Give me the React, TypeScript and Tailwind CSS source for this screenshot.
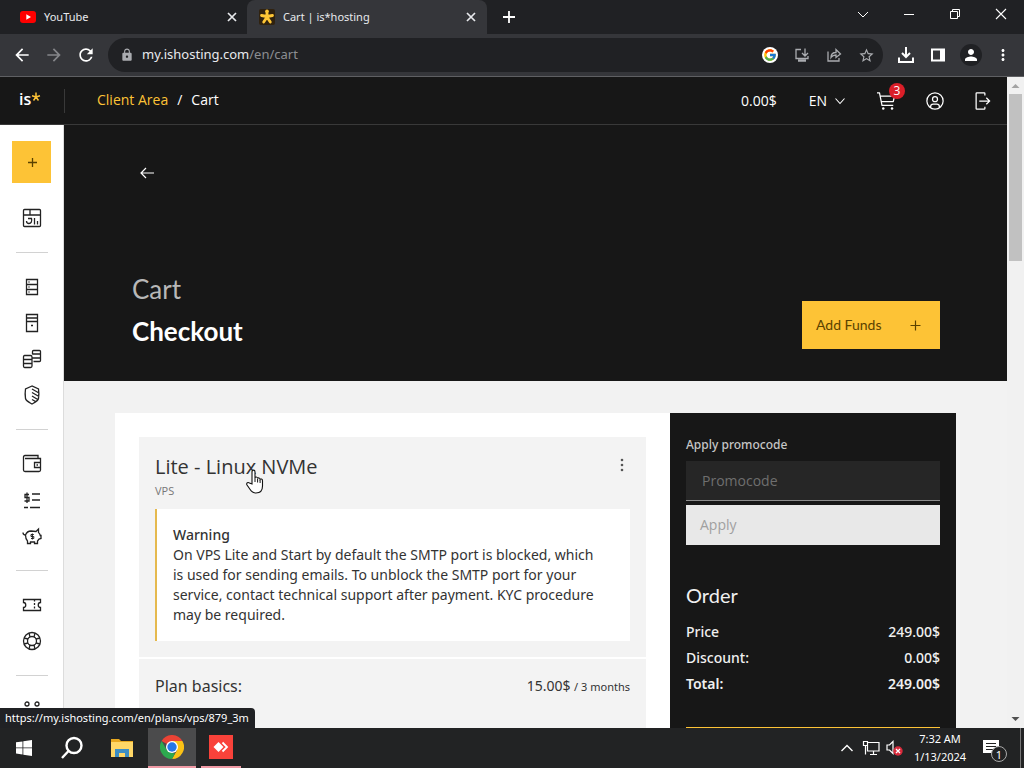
import type { ReactNode } from "react";
import { MdArrowBack, MdArrowForward, MdLock, MdMoreVert, MdPerson, MdRefresh, MdStarBorder } from "react-icons/md";
import { FcGoogle } from "react-icons/fc";

const uiFont = "font-['Noto_Sans','Open_Sans',sans-serif]";

function Line({ size = 20, width = 1.3, children }: { size?: number; width?: number; children: ReactNode }) {
  return (
    <svg width={size} height={size} viewBox={`0 0 ${size} ${size}`} fill="none" stroke="currentColor" strokeWidth={width} aria-hidden="true">
      {children}
    </svg>
  );
}

function CloseIcon() {
  return (
    <Line size={12} width={1.7}>
      <path d="M2 2l8 8M10 2l-8 8" />
    </Line>
  );
}

function TabStrip() {
  return (
    <div className="flex h-[34px] items-stretch bg-[#202124] text-[11px] text-[#e8eaed]">
      <div className="flex w-[247px] items-center pl-5 pr-[9px]">
        <svg width="16" height="12" viewBox="0 0 16 12" aria-hidden="true">
          <rect width="16" height="12" rx="3" fill="#f00" />
          <path d="M6.3 3.3v5.4L11 6z" fill="#fff" />
        </svg>
        <span className="ml-2 grow">YouTube</span>
        <button aria-label="Close YouTube"><CloseIcon /></button>
      </div>
      <div className="flex w-[240px] items-center rounded-t-lg bg-[#35363a] pl-3 pr-[10px]">
        <svg width="16" height="16" viewBox="0 0 16 16" aria-hidden="true">
          <rect width="16" height="16" rx="2" fill="#30220f" />
          <path d="M8 7.5V3M8 7.5l-5.500-1M8 7.500l5.500-1M8 8l-3.300 5M8 8l3.300 5" stroke="#ffc736" strokeWidth="2.800" strokeLinecap="round" />
          <circle cx="8" cy="2.300" r="1.800" fill="#ffc736" />
        </svg>
        <span className="ml-2 grow">Cart | is*hosting</span>
        <button aria-label="Close cart"><CloseIcon /></button>
      </div>
      <button aria-label="New tab" className="ml-3.5 text-white">
        <Line size={16} width={1.8}><path d="M8 2v12M2 8h12" /></Line>
      </button>
      <div className="ml-auto flex items-start gap-[30px] pr-[15px] pt-1.5 text-white">
        <button aria-label="Search tabs"><Line size={16} width={1}><path d="M3 6l5 5 5-5" /></Line></button>
        <button aria-label="Minimize"><Line size={16} width={1}><path d="M3 8.5h10" /></Line></button>
        <button aria-label="Restore"><Line size={16} width={1}><path d="M3.5 5.5h7v7h-7zM5.500 5.500v-2h7v7h-2" /></Line></button>
        <button aria-label="Close window"><Line size={16} width={1.100}><path d="M3 3l10 10M13 3L3 13" /></Line></button>
      </div>
    </div>
  );
}

function Toolbar() {
  return (
    <div className="flex h-[43px] items-center border-b border-[#5f6063] bg-[#35363a] pl-3 pr-3 text-white">
      <button aria-label="Back"><MdArrowBack size={20} /></button>
      <button aria-label="Forward" className="ml-3 text-[#85868a]"><MdArrowForward size={20} /></button>
      <button aria-label="Reload" className="ml-3"><MdRefresh size={20} /></button>
      <div className="ml-3 flex h-[34px] min-w-0 grow items-center rounded-full bg-[#202124] pl-3 pr-2 text-[#aaacb0]">
        <MdLock size={14} />
        <span className="ml-2 grow text-[13px] text-[#8c8e92]"><span className="text-[#e8eaed]">my.ishosting.com</span>/en/cart</span>
        <div className="flex items-center gap-4">
          <span className="grid size-4 place-items-center rounded-full bg-white"><FcGoogle size={14} /></span>
          <Line size={16} width={1.300}>
            <path d="M7 2.500H2v9h12V9M11 1.500v7M8 6l3 3 3-3" /><path d="M4 13.500h8" strokeWidth="2.500" />
          </Line>
          <Line size={16} width={1.3}>
            <path d="M2 4.500v9.500h11v-3M5 10.500c0-3 2-5 5-5V2.500L14.500 7 10 10.500V8c-2.500 0-4 1-5 2.500z" />
          </Line>
          <MdStarBorder size={17} />
        </div>
      </div>
      <div className="ml-3.5 flex items-center">
        <button aria-label="Downloads"><Line size={18} width={2}><path d="M9 1v10M5 7l4 4 4-4M2 11.500V16h14v-4.500" /></Line></button>
        <button aria-label="Side panel" className="ml-[15px]">
          <svg width="16" height="16" viewBox="0 0 16 16" aria-hidden="true"><path d="M1 1.500h14v13H1zM3 3.500v9h7v-9z" fill="currentColor" fillRule="evenodd" /></svg>
        </button>
        <button aria-label="Profile" className="ml-3.5 grid size-[22px] place-items-center rounded-full bg-[#202124]"><MdPerson size={18} /></button>
        <button aria-label="Menu" className="ml-3"><MdMoreVert size={18} /></button>
      </div>
    </div>
  );
}

function SiteHeader() {
  return (
    <header className="flex h-12 shrink-0 items-center border-b border-[#393939] bg-[#171717] text-sm text-white">
      <a href="#home" className="flex w-[65px] items-center border-r border-[#393939] pb-1 pl-[19px] text-base font-semibold leading-5">
        is
        <svg width="10" height="16" viewBox="0 0 10 16" aria-hidden="true">
          <path d="M5 6V1.500M5 6L1 4.800M5 6l4-1.200M5 6L2.500 9.500M5 6l2.500 3.500" stroke="#fdc336" strokeWidth="1.500" />
        </svg>
      </a>
      <nav className="ml-8 flex gap-[9px] pb-0.5">
        <a href="#client" className="text-[#fdc336]">Client Area</a>
        <span>/</span>
        <span>Cart</span>
      </nav>
      <div className="ml-auto flex items-center pr-[14px]">
        <span>0.00$</span>
        <button className="ml-8 flex items-center gap-1.5">
          EN
          <Line size={14} width={1.100}><path d="M2.500 4.500L7 9.500l4.500-5" /></Line>
        </button>
        <button aria-label="Cart" className="relative ml-[30px]">
          <svg width="20" height="20" viewBox="0 0 32 32" fill="currentColor" aria-hidden="true">
            <circle cx="10" cy="28" r="2" /><circle cx="24" cy="28" r="2" />
            <path d="M28 7H5.820L5 2.800A1 1 0 0 0 4 2H0v2h3.180L7 23.200A1 1 0 0 0 8 24h18v-2H8.820L8 18h18a1 1 0 0 0 1-.78l2-9A1 1 0 0 0 28 7zm-2.800 9H7.620l-1.400-7h20.530z" />
          </svg>
          <span className="absolute -right-2 -top-2 grid size-4 place-items-center rounded-full bg-[#da1e28] text-xs leading-none">3</span>
        </button>
        <button aria-label="Account" className="ml-7">
          <svg width="20" height="20" viewBox="0 0 32 32" fill="currentColor" aria-hidden="true">
            <path d="M16 8a5 5 0 1 0 5 5 5 5 0 0 0-5-5zm0 8a3 3 0 1 1 3-3 3 3 0 0 1-3 3z" />
            <path d="M16 2a14 14 0 1 0 14 14A14 14 0 0 0 16 2zm-6 24.400V25a3 3 0 0 1 3-3h6a3 3 0 0 1 3 3v1.400a11.900 11.900 0 0 1-12 0zm14-1.500a5 5 0 0 0-5-4.900h-6a5 5 0 0 0-5 4.900 12 12 0 1 1 16 0z" />
          </svg>
        </button>
        <button aria-label="Log out" className="ml-7">
          <svg width="20" height="20" viewBox="0 0 32 32" fill="currentColor" aria-hidden="true">
            <path d="M6 30h12a2 2 0 0 0 2-2v-3h-2v3H6V4h12v3h2V4a2 2 0 0 0-2-2H6a2 2 0 0 0-2 2v24a2 2 0 0 0 2 2z" />
            <path d="M20.586 20.586L24.172 17H10v-2h14.172l-3.586-3.586L22 10l6 6-6 6z" />
          </svg>
        </button>
      </div>
    </header>
  );
}

const sideGroups: { label: string; art: ReactNode }[][] = [
  [{ label: "Dashboard", art: <><rect x="1.500" y="1.500" width="17" height="17" rx="1" /><path d="M1.500 7h17M8 1.500V7M12.500 10v6.500M15.500 13v3.500M6 10.500h3.500c.8 3-.5 5-2.500 5-1.500 0-2.500-1-2.500-2.500" /></> }],
  [
    { label: "VPS", art: <><path d="M4.500 2.500h11v15h-11zM4.500 7.500h11M4.500 12.500h11M6.500 5h1M6.500 10h1M6.500 15h1" /></> },
    { label: "Dedicated", art: <><path d="M4.500 1.500h11v17h-11zM4.500 5h11M4.500 8.500h11M9 12.500h2" /></> },
    { label: "Storage", art: <><path d="M10.500 5.500v-3c0-1 .5-1 1-1h6c1 0 1 .5 1 1v9c0 1-.5 1-1 1h-6M10.500 5h8M10.500 9h8M1.500 8c0-1 .5-1.500 1-1.500h6c1 0 1.500.5 1.500 1.500v9c0 1-.5 1.500-1.500 1.500h-6c-1 0-1-.5-1-1.500zM1.500 10.500H10M1.500 14.500H10" /></> },
    { label: "Protection", art: <><path d="M10 1L3.500 4C3 7 3 10 3.500 13.500c.5 2.500 4 4 6.500 5.500 2.500-1.500 6-3 6.500-5.500.5-3.500.5-6.500 0-9.500zM10 4l7 4M10 7.500l7 4M10 11l6.500 4M10 14.500l4.500 2.500" /></> },
  ],
  [
    { label: "Wallet", art: <><path d="M16 4.500v-3H3c-1 0-1.500.5-1.500 1.500v13c0 1 .5 1.500 1.500 1.500h14c1 0 1.500-.5 1.500-1.500V4.500H3M18.500 8.500h-6v5h6M14.500 11h1.500" /></> },
    { label: "Invoices", art: <><path d="M10 4h8M10 10h8M2 17.500h4M8 17.500h10M7 4.500H3v3h4V11H2.500M5 2.500V13" /></> },
    { label: "Savings", art: <><path d="M1 6.500c0 2 1 2.500 2.500 2.500C4.500 6.500 6.500 5 9 5l5 .500L16.500 3v3.500c1 .800 1.500 1.800 1.800 3h.7v3l-2 .500-1.500 2v2.500h-3V16H8.500v1.500h-3V15C4.500 14 3.500 12 3.500 9" /><path d="M11.800 8.500H9v2h2.800v2H9M10.400 7.500v6" strokeWidth="1" /></> },
  ],
  [
    { label: "Coupons", art: <><path d="M1.500 4.500h17v3c-3 0-3 5 0 5v3h-17v-3c3 0 3-5 0-5z" /><path d="M12.500 4.500v11" strokeDasharray="2 1.500" /></> },
    { label: "Support", art: <><circle cx="10" cy="10" r="8.500" /><circle cx="10" cy="10" r="4.500" /><path d="M8 6L7 2M12 6l1-4M8 14l-1 4M12 14l1 4M6 8L2 7M6 12l-4 1M14 8l4-1M14 12l4 1" /></> },
  ],
  [{ label: "Team", art: <><circle cx="5" cy="4" r="2" /><circle cx="15" cy="4" r="2" /><path d="M1.500 18v-6c0-3 7-3 7 0v6M11.500 18v-6c0-3 7-3 7 0v6" /></> }],
];

function Sidebar() {
  return (
    <aside className="w-16 shrink-0 overflow-hidden bg-white px-3 pt-4 text-[#222] shadow-[inset_-1px_0_0_#dcdcdc]">
      <button aria-label="Add service" className="mb-[17px] grid h-[42px] w-[39px] place-items-center bg-[#fdc336] text-[#5a4200]">
        <Line size={14} width={1.300}><path d="M7.500 3v9M3 7.500h9" /></Line>
      </button>
      <div className="flex flex-col divide-y divide-[#d2d2d2] px-1">
        {sideGroups.map((group, i) => (
          <div key={i} className={i === 0 ? "pb-4" : "py-4"}>
            {group.map((item) => (
              <a key={item.label} href="#section" aria-label={item.label} className="flex h-9 items-center justify-center">
                <Line>{item.art}</Line>
              </a>
            ))}
          </div>
        ))}
      </div>
    </aside>
  );
}

function Hero() {
  return (
    <div className="flex h-64 shrink-0 flex-col justify-between bg-[#171717] px-[67px] pb-8 pt-10 text-white">
      <button aria-label="Back to plans" className="ml-2 w-4">
        <Line size={16} width={1.200}><path d="M15 8H2M7 3L2 8l5 5" /></Line>
      </button>
      <div className="flex items-end justify-between">
        <h1 className="-mb-[3px] ml-px font-['Lato',sans-serif] text-[26px] font-bold leading-[42px]">
          <span className="block font-normal text-[#b8b8b8]">Cart</span>
          Checkout
        </h1>
        <button className="flex h-12 w-[138px] items-center justify-between bg-[#fdc336] pl-3.5 pr-[18px] font-['Lato',sans-serif] text-sm text-[#5a4200]">
          Add Funds
          <Line size={14} width={1.200}><path d="M7.500 2.500v10M2.500 7.500h10" /></Line>
        </button>
      </div>
    </div>
  );
}

function CartItem() {
  return (
    <section className="relative min-w-0 grow bg-white p-6 text-[#333]">
      <div className="border-b-2 border-white bg-[#f3f3f3] p-4">
        <div className="flex justify-between">
          <h2 className="text-xl leading-7"><a href="#plan">Lite - Linux NVMe</a></h2>
          <button aria-label="Item options" className="mb-1 w-4 text-[#555]">
            <svg width="16" height="16" viewBox="0 0 16 16" fill="currentColor" aria-hidden="true"><circle cx="8" cy="3" r="1.300" /><circle cx="8" cy="8" r="1.300" /><circle cx="8" cy="13" r="1.300" /></svg>
          </button>
        </div>
        <p className="text-[11px] leading-5 text-[#777]">VPS</p>
        <div className={`mt-2 border-l-2 border-[#e5b94e] bg-white p-4 text-sm leading-5 ${uiFont}`}>
          <strong className="block font-medium">Warning</strong>
          <p className="pr-3">On VPS Lite and Start by default the SMTP port is blocked, which is used for sending emails. To unblock the SMTP port for your service, contact technical support after payment. KYC procedure may be required.</p>
        </div>
      </div>
      <div className={`flex h-40 items-start justify-between bg-[#f3f3f3] px-4 pt-[15px] ${uiFont}`}>
        <h3 className="text-base leading-6">Plan basics:</h3>
        <p className="text-sm leading-6">15.00$ <span className="text-[11px]">/ 3 months</span></p>
      </div>
      <svg className="absolute left-[131px] top-[56px]" width="18" height="26" viewBox="0 0 18 26" aria-hidden="true">
        <path d="M6 15V3c0-2.500 3-2.500 3 0v6c0-1.500 2.600-1.200 2.600.5.500-1 2.500-.8 2.500.9.700-.8 2.400-.4 2.400 1.300V17c0 4-2 7-6.500 7-4 0-5-2-6.200-4L1 16c-1-2 1-3.200 2.500-2z" fill="#fff" stroke="#111" strokeWidth="1.100" />
        <path d="M9 9v4M11.600 10v3.500M14.100 11v3" stroke="#111" />
      </svg>
    </section>
  );
}

function OrderPanel() {
  return (
    <aside className="w-[286px] shrink-0 bg-[#171717] px-4 pt-5 text-sm text-[#f0f0f0]">
      <label htmlFor="promo" className={`block text-xs font-medium leading-6 text-[#c6c6c6] ${uiFont}`}>Apply promocode</label>
      <input id="promo" placeholder="Promocode" className="mt-1 block h-10 w-full border-b border-[#8d8d8d] bg-[#262626] px-4 text-sm outline-none placeholder:text-[#6f6f6f]" />
      <button className="mt-1 block h-10 w-full bg-[#e8e8e8] px-3.5 text-left text-sm text-[#a0a0a0]">Apply</button>
      <h2 className="mt-9 font-['Lato',sans-serif] text-xl leading-7">Order</h2>
      <dl className={`mt-2.5 grid grid-cols-2 font-medium leading-[26px] [&>dd]:text-right ${uiFont}`}>
        <dt>Price</dt><dd>249.00$</dd>
        <dt>Discount:</dt><dd>0.00$</dd>
        <dt className="font-semibold">Total:</dt><dd className="font-semibold">249.00$</dd>
      </dl>
      <button aria-label="Checkout" className="mt-[30px] block h-12 w-full bg-[#fdc336]" />
    </aside>
  );
}

function Taskbar() {
  return (
    <footer className="flex h-10 shrink-0 items-stretch bg-[#222324] text-xs text-white">
      <button aria-label="Start" className="grid w-12 place-items-center">
        <svg width="16" height="16" viewBox="0 0 16 16" fill="currentColor" aria-hidden="true"><path d="M0 2.300l6.500-.9v6.100H0zM7.300 1.300L16 0v7.500H7.300zM0 8.300h6.500v6.200L0 13.600zM7.300 8.300H16V16l-8.700-1.300z" /></svg>
      </button>
      <button aria-label="Search" className="grid w-12 place-items-center">
        <Line size={24} width={2.400}><circle cx="14" cy="9.500" r="7.500" /><path d="M8.500 15L2 22" /></Line>
      </button>
      <button aria-label="File Explorer" className="grid w-[52px] place-items-center">
        <svg width="22" height="20" viewBox="0 0 22 20" aria-hidden="true"><path d="M0 1h8l2 2h12v5H0z" fill="#e8a820" /><path d="M0 4h22v15H0z" fill="#ffd767" /><path d="M4 19v-8h14v8h-4v-4H8v4z" fill="#3d8ec4" /></svg>
      </button>
      <button aria-label="Chrome" className="grid w-12 place-items-center border-b-2 border-[#f09aa5] bg-[#4b4b4c]">
        <svg width="24" height="24" viewBox="0 0 24 24" aria-hidden="true">
          <path d="M12 12L1.600 6a12 12 0 0 1 20.800 0z" fill="#ea4335" />
          <path d="M12 6h10.400A12 12 0 0 1 12 24l5.200-9z" fill="#fbc116" />
          <path d="M1.600 6l5.200 9L12 18l3 .5L12 24A12 12 0 0 1 1.600 6z" fill="#2da94f" />
          <circle cx="12" cy="12" r="6" fill="#fff" /><circle cx="12" cy="12" r="4.700" fill="#2677e8" />
        </svg>
      </button>
      <button aria-label="AnyDesk" className="ml-[5px] grid w-10 place-items-center border-b-2 border-[#f09aa5]">
        <svg width="24" height="24" viewBox="0 0 24 24" aria-hidden="true"><path d="M0 0h24v24H0z" fill="#f9423a" /><path d="M9.500 7L14.500 12l-5 5-5-5z" fill="#fff" /><path d="M13.500 7.500L18 12l-4.500 4.500" fill="none" stroke="#fff" strokeWidth="1.800" /></svg>
      </button>
      <div className="ml-auto flex items-center">
        <button aria-label="Hidden icons"><Line size={14} width={1.400}><path d="M1.500 10L7 4.500l5.500 5.500" /></Line></button>
        <span className="ml-2"><Line size={18} width={1.200}><path d="M6 3.500h11v8.500H5.500V6M8 15.500h7M11.500 12v3.500M1.500 2.500h4v4h-4zM3.500 6.500v9" /></Line></span>
        <svg className="ml-1.5" width="18" height="18" viewBox="0 0 18 18" aria-hidden="true">
          <path d="M1 6h2.500L7 2.500v12L3.500 11H1z" fill="none" stroke="#fff" strokeWidth="1.200" />
          <circle cx="12" cy="12" r="4.700" fill="#d92b3c" /><path d="M10 10l4 4M14 10l-4 4" stroke="#fff" strokeWidth="1.300" />
        </svg>
        <p className="ml-2 w-14 text-center text-[11px] leading-[18px]"><span className="block">7:32 AM</span>1/13/2024</p>
        <button aria-label="Notifications" className="relative ml-[15px] mr-[13px] h-7 w-6">
          <svg width="16" height="17" viewBox="0 0 16 17" aria-hidden="true"><path d="M0 0h16v13h-3v4l-4-4H0z" fill="#fff" /><path d="M3 3.500h10M3 6.500h10M3 9.500h7" stroke="#222" /></svg>
          <span className="absolute bottom-0 right-0 grid size-4 place-items-center rounded-full border border-[#aaa] bg-[#222324] text-[11px] leading-none">1</span>
        </button>
        <i className="h-full w-[4px] border-l border-[#777]" />
      </div>
    </footer>
  );
}

export default function App() {
  return (
    <div className={`flex h-screen flex-col overflow-hidden ${uiFont}`}>
      <div className="shrink-0">
        <TabStrip />
        <Toolbar />
      </div>
      <div className="relative flex min-h-0 flex-1 font-['Open_Sans',sans-serif]">
        <div className="flex min-w-0 grow flex-col">
          <SiteHeader />
          <div className="flex min-h-0 flex-1">
            <Sidebar />
            <main className="flex min-w-0 grow flex-col overflow-hidden bg-[#f2f2f2]">
              <Hero />
              <div className="flex px-[51px] pt-8">
                <CartItem />
                <OrderPanel />
              </div>
            </main>
          </div>
        </div>
        <div className="flex w-[17px] shrink-0 flex-col items-center bg-[#f1f1f1]">
          <svg width="17" height="17" viewBox="0 0 17 17" aria-hidden="true"><path d="M4.500 11h8l-4-4z" fill="#a3a3a3" /></svg>
          <div className="h-[167px] w-[13px] bg-[#c1c1c1]" />
          <svg className="mt-auto" width="17" height="17" viewBox="0 0 17 17" aria-hidden="true"><path d="M4.500 6h8l-4 4z" fill="#505050" /></svg>
        </div>
        <div className={`absolute bottom-0 left-0 rounded-tr bg-[#202124] py-0.5 pl-[5px] pr-1.5 text-[11px] leading-4 text-white ${uiFont}`}>
          https://my.ishosting.com/en/plans/vps/879_3m
        </div>
      </div>
      <Taskbar />
    </div>
  );
}
